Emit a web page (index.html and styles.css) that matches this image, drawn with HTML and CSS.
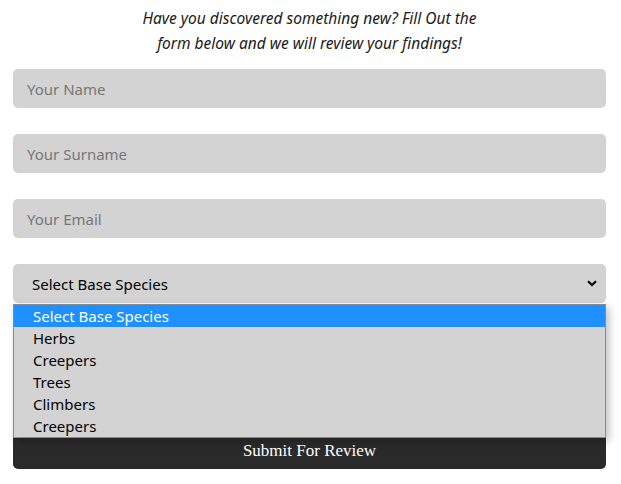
FILE: index.html
```html
<!DOCTYPE html>
<html>
<head>
<meta charset="utf-8">
<link rel="stylesheet" href="styles.css">
</head>
<body>
<div class="page">
  <p class="intro">Have you discovered something new? Fill Out the<br>form below and we will review your findings!</p>
  <form class="form">
    <div class="field"><span class="placeholder">Your Name</span></div>
    <div class="field"><span class="placeholder">Your Surname</span></div>
    <div class="field"><span class="placeholder">Your Email</span></div>
    <div class="select-wrap">
      <div class="field select">
        <span class="value">Select Base Species</span>
        <svg class="chevron" width="10" height="7" viewBox="0 0 10 7"><path d="M1 1.2 L5 5 L9 1.2" fill="none" stroke="#000" stroke-width="2.2"/></svg>
      </div>
      <ul class="options">
        <li class="active">Select Base Species</li>
        <li>Herbs</li>
        <li>Creepers</li>
        <li>Trees</li>
        <li>Climbers</li>
        <li>Creepers</li>
      </ul>
    </div>
    <div class="field area"></div>
    <button type="button" class="submit">Submit For Review</button>
  </form>
</div>
</body>
</html>
```
FILE: styles.css
```css
* { box-sizing: border-box; }
html, body { margin: 0; padding: 0; background: #fff; }
body { font-family: "Noto Sans", "Open Sans", sans-serif; }
.page { padding: 0 15px 15px 13px; }
.intro {
  margin: 6px 0 13px;
  text-align: center;
  font-style: italic;
  font-size: 15.5px;
  line-height: 25px;
  color: #1a1a1a;
}
.form { display: flex; flex-direction: column; gap: 26px; }
.field {
  height: 39px;
  background: #d3d3d3;
  border-radius: 5px;
  display: flex;
  align-items: center;
  padding: 0 14px;
  font-size: 15px;
  flex: none;
}
.placeholder { color: #767676; }
.select-wrap { position: relative; z-index: 2; }
.select { padding: 0 9px 0 19px; justify-content: space-between; color: #000; }
.select .value { font-size: 15px; }
.options {
  position: absolute;
  left: 0; right: 0; top: 40px;
  margin: 0; padding: 0;
  list-style: none;
  background: #d3d3d3;
  border: 1px solid #8a8a8a;
  box-shadow: 3px 3px 8px rgba(0,0,0,0.25);
  font-size: 15px;
}
.options li { height: 22px; line-height: 22px; padding-left: 19px; color: #000; }
.options li.active { background: #1e90ff; color: #fff; }
.area { height: 74px; }
.submit {
  flex: none;
  height: 40px;
  border: 0;
  border-radius: 5px;
  background: #2a2a2a;
  color: #fff;
  font-family: "Liberation Serif", "DejaVu Serif", serif;
  font-size: 17px;
  padding: 3px 0 0;
}
```
